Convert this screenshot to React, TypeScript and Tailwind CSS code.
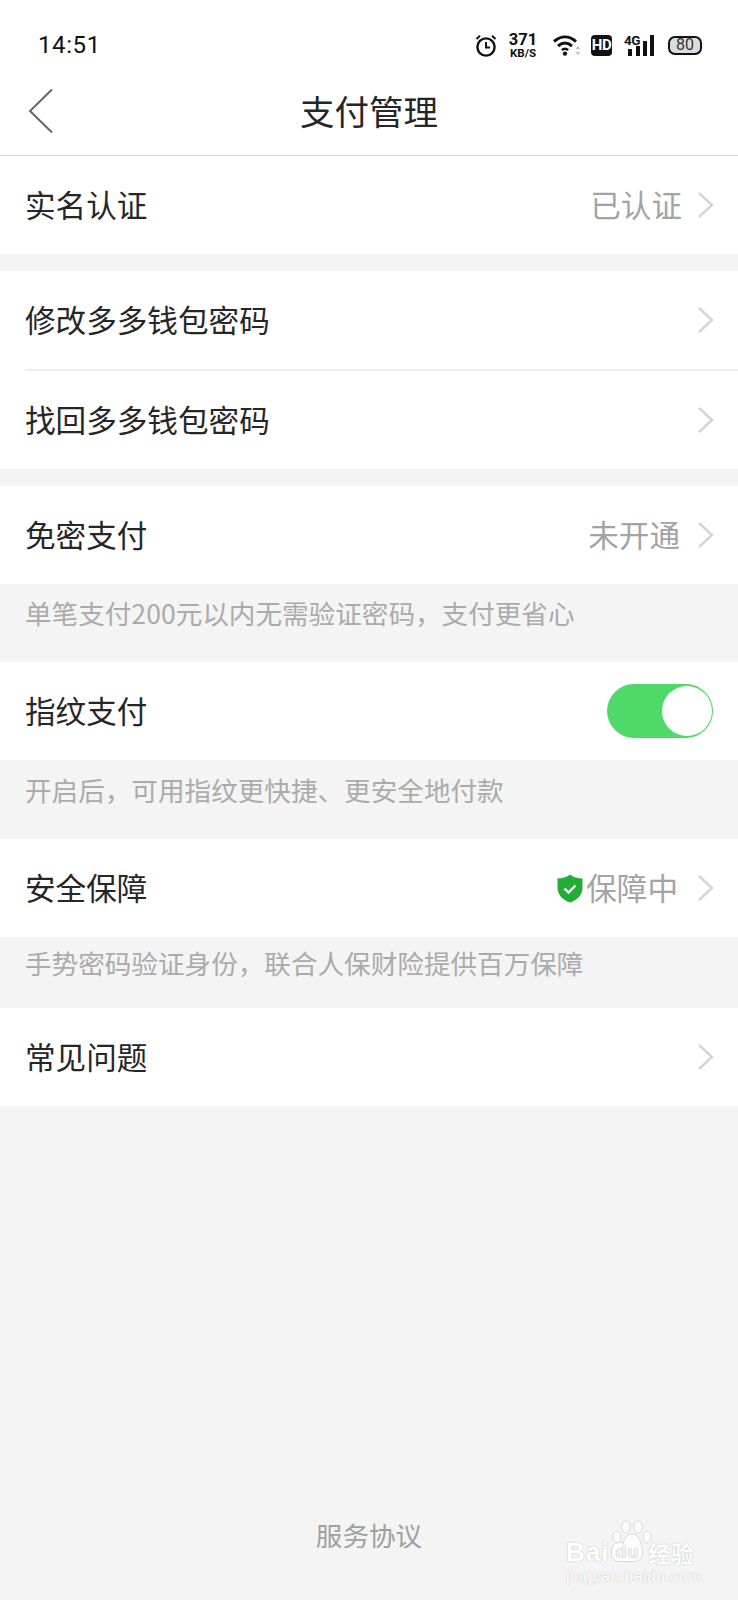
import React from 'react';

const cjk = "font-['Noto_Sans_CJK_SC','Noto_Sans',sans-serif]";

const Chevron = ({ className = '' }: { className?: string }) => (
  <svg width="17" height="26" viewBox="0 0 17 26" fill="none" className={className}>
    <path d="M2 1 L15 13 L2 25" stroke="#d4d4d4" strokeWidth="2.4" />
  </svg>
);

const Row = ({ label, children }: { label: string; children?: React.ReactNode }) => (
  <div className="flex h-[98px] items-center justify-between bg-white pr-[24px] pl-[25px]">
    <span className="pb-[1px] text-[30.6px] leading-none text-[#262626]">{label}</span>
    {children ?? <Chevron />}
  </div>
);

const Value = ({ text, gap }: { text: string; gap: string }) => (
  <div className="flex items-center">
    <span className={`pb-[1px] text-[30.6px] leading-none text-[#a3a3a3] ${gap}`}>{text}</span>
    <Chevron />
  </div>
);

const Hint = ({ text, height }: { text: string; height: string }) => (
  <div className={`flex items-center pl-[25px] text-[26.6px] leading-none text-[#ababab] ${height}`}>{text}</div>
);

const StatusIcons = () => (
  <div className="flex items-center">
    {/* alarm */}
    <svg width="22" height="23" viewBox="0 0 22 23" fill="none" stroke="#111" strokeWidth="2.4">
      <circle cx="11" cy="13" r="8.6" />
      <path d="M11 8v5.5h4" strokeWidth="2" />
      <path d="M1.5 5 5 1.8M20.5 5 17 1.8" strokeWidth="2" />
    </svg>
    {/* speed */}
    <div className="ml-[12px] flex w-[28px] flex-col items-center font-['Roboto',sans-serif] font-bold text-[#111]">
      <span className="text-[16.5px] leading-[15px]">371</span>
      <span className="text-[11.5px] leading-[12px]">KB/S</span>
    </div>
    {/* wifi */}
    <svg width="28" height="21" viewBox="0 0 28 21" fill="none" className="ml-[16px]">
      <path d="M1 6.5C8 0.5 16 0.5 23 6.5" stroke="#111" strokeWidth="3" />
      <path d="M5 11C9.5 7.2 14.5 7.2 19 11" stroke="#111" strokeWidth="3" />
      <path d="M8.8 15C10.8 13.4 13.2 13.4 15.2 15" stroke="#111" strokeWidth="2.6" />
      <circle cx="12" cy="18.6" r="2.2" fill="#111" />
      <path d="M25 11l2.4 3h-4.8zM25 20l2.4-3h-4.8z" fill="#bdbdbd" />
    </svg>
    {/* hd */}
    <div className="ml-[10px] flex h-[21px] w-[21px] items-center justify-center rounded-[4px] bg-[#111] font-['Roboto',sans-serif] text-[15px] leading-none font-bold tracking-[-0.5px] text-white">
      HD
    </div>
    {/* signal */}
    <div className="relative ml-[12px] h-[21px] w-[30px]">
      <span className="absolute top-0 left-0 font-['Roboto',sans-serif] text-[13.5px] leading-[11px] font-bold tracking-[-0.5px] text-[#111]">4G</span>
      <svg width="30" height="21" viewBox="0 0 30 21" fill="#111">
        <rect x="4" y="14" width="4" height="7" />
        <rect x="12" y="11" width="4" height="10" />
        <rect x="19" y="6" width="4" height="15" />
        <rect x="26" y="0" width="4" height="21" />
      </svg>
    </div>
    {/* battery */}
    <div className="ml-[14px] flex items-center">
      <div className="flex h-[19px] w-[34px] items-center justify-center rounded-[7px] border-2 border-[#111] bg-[#dcdcdc] font-['Roboto',sans-serif] text-[16px] leading-none text-[#333]">
        80
      </div>
    </div>
  </div>
);

const Watermark = () => (
  <div className="pointer-events-none absolute top-[1520px] left-[566px] w-[134px] text-white [text-shadow:0_0_1.5px_#b4b4b4]">
    <svg width="40" height="30" viewBox="0 0 40 30" className="absolute top-0 left-[46px]" fill="#fbfbfb" stroke="#d8d8d8">
      <ellipse cx="5" cy="17" rx="4" ry="6" />
      <ellipse cx="14" cy="7" rx="4.5" ry="6" />
      <ellipse cx="26" cy="7" rx="4.5" ry="6" />
      <ellipse cx="35" cy="17" rx="4" ry="6" />
      <path d="M11 24C13 16 16 14 20 14C24 14 27 16 29 24" />
    </svg>
    <div className="flex items-center pt-[20px] font-['Liberation_Sans',sans-serif] text-[26px] leading-[24px] font-bold tracking-[1px]">
      <span>Bai</span>
      <span className="mx-[2px] rounded-[8px] border border-[#d8d8d8] bg-white px-[3px] text-[18px] leading-[18px] text-[#f0f0f0]">du</span>
      <span className={`${cjk} ml-[3px] text-[22px] leading-[24px] font-bold`}>经验</span>
    </div>
    <div className="mt-[6px] font-['Liberation_Sans',sans-serif] text-[16px] leading-[14px] tracking-[0.4px]">jingyan.baidu.com</div>
  </div>
);

const App: React.FC = () => {
  return (
    <div className={`relative flex min-h-[1600px] w-[738px] flex-col bg-[#f4f4f4] ${cjk}`}>
      {/* Header */}
      <div className="bg-white">
        <div className="flex h-[72px] items-center justify-between pt-[18px] pr-[36px] pl-[38px]">
          <span className="font-['Roboto',sans-serif] text-[24px] leading-none tracking-[0.6px] text-[#111]">14:51</span>
          <StatusIcons />
        </div>
        <div className="relative flex h-[84px] items-center justify-center border-b border-[#d8d8d8]">
          <svg width="26" height="46" viewBox="0 0 26 46" fill="none" className="absolute top-[16px] left-[28px]">
            <path d="M24 1.5 L2 23 L24 44.5" stroke="#666666" strokeWidth="2" />
          </svg>
          <span className="pb-[6px] text-[34.5px] leading-none text-[#262626]">支付管理</span>
        </div>
      </div>

      <Row label="实名认证">
        <Value text="已认证" gap="mr-[15px]" />
      </Row>

      <div className="mt-[17px] bg-white">
        <Row label="修改多多钱包密码" />
        <div className="ml-[25px] h-[2px] bg-[#efefef]" />
        <Row label="找回多多钱包密码" />
      </div>

      <div className="mt-[17px]">
        <Row label="免密支付">
          <Value text="未开通" gap="mr-[17px]" />
        </Row>
      </div>
      <Hint text="单笔支付200元以内无需验证密码，支付更省心" height="h-[78px] pb-[20px]" />

      <div className="flex h-[98px] items-center justify-between bg-white pr-[25px] pl-[25px]">
        <span className="pb-[1px] text-[30.6px] leading-none text-[#262626]">指纹支付</span>
        <div className="flex h-[54px] w-[106px] items-center justify-end rounded-full bg-[#4fd968] pr-[1.5px]">
          <div className="h-[50px] w-[50px] rounded-full bg-white" />
        </div>
      </div>
      <Hint text="开启后，可用指纹更快捷、更安全地付款" height="h-[79px] pb-[19px]" />

      <Row label="安全保障">
        <div className="flex items-center">
          <svg width="26" height="29" viewBox="0 0 26 29" className="mr-[3px]">
            <path d="M13 0.5C16 3 20.5 4.4 25.5 4.6V14C25.5 21 20 26 13 28.5C6 26 0.5 21 0.5 14V4.6C5.5 4.4 10 3 13 0.5Z" fill="#22ac38" />
            <path d="M7.5 14.5l4 4 7-7" fill="none" stroke="#ffffff" strokeWidth="2.4" />
          </svg>
          <span className="mr-[19px] pb-[1px] text-[30.6px] leading-none text-[#a3a3a3]">保障中</span>
          <Chevron />
        </div>
      </Row>
      <Hint text="手势密码验证身份，联合人保财险提供百万保障" height="h-[71px] pb-[18px]" />

      <Row label="常见问题" />

      <div className="mt-auto flex justify-center pb-[52px] text-[26.6px] leading-[26px] text-[#a0a0a0]">服务协议</div>
      <Watermark />
    </div>
  );
};

export default App;
